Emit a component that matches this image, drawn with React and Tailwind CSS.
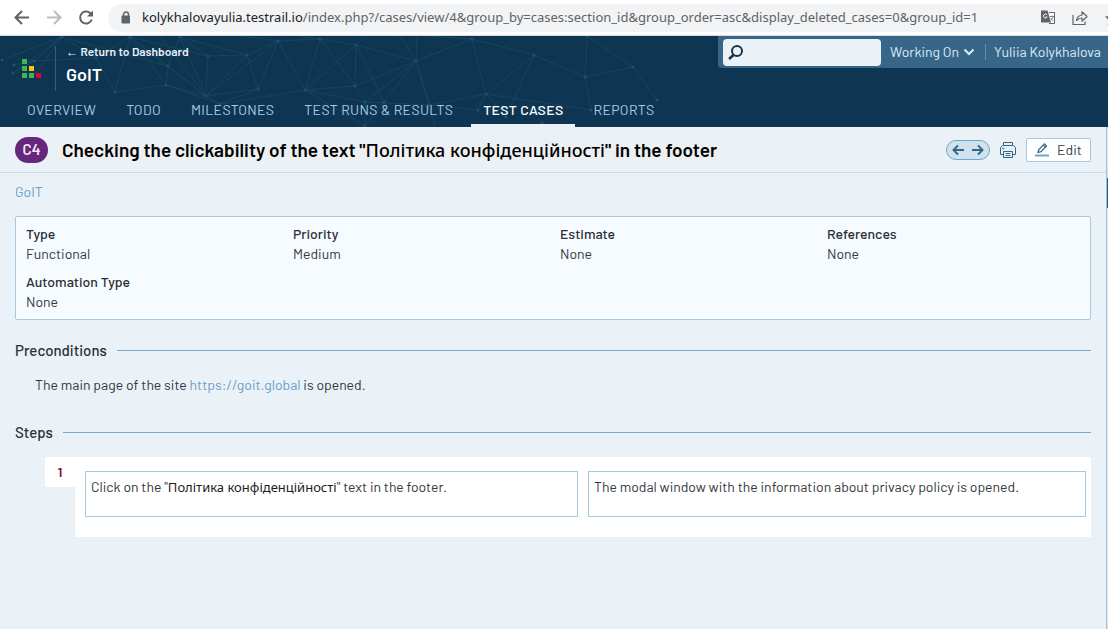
import React from "react";

const NODES = [
  [2,24],[14,29],[13,37],[34,25],[62,1],[96,22],[115,56],[130,1],[168,30],[180,1],[166,49],[208,20],[206,60],[247,19],[278,5],[258,53],[305,54],[320,3],[356,9],[416,25],[355,50],[365,66],[384,66],[472,3],[534,19],[486,58],[542,87],[506,81],[478,74],[585,41],[633,31],[657,64],[591,74],[587,0],[220,68],[365,90],[430,69],
];

const EDGES = [
  [0,4],[2,4],[1,3],[3,4],[2,3],[3,5],[4,5],[5,6],[6,7],[5,7],[7,8],[6,10],[8,10],[9,11],[8,9],[8,12],[10,12],[7,10],[11,12],[11,13],[9,13],[13,12],[13,15],[13,14],[14,15],[15,12],[14,16],[17,16],[14,17],[17,18],[16,18],[18,19],[19,20],[16,20],[16,21],[19,22],[20,21],[19,23],[23,25],[23,24],[24,25],[25,28],[24,27],[25,27],[24,29],[29,30],[30,31],[29,32],[29,33],[30,33],[25,32],[7,12],[12,34],[15,34],[16,34],[19,21],[18,20],[18,22],[17,20],[14,12],[16,35],[21,35],[22,35],[19,36],[21,36],[36,28],[36,25],[10,34],[4,8],[7,11],[9,12],
];

function Network() {
  return (
    <svg className="pointer-events-none absolute left-0 top-0" width="680" height="91" viewBox="0 0 680 91" aria-hidden="true">
      <g stroke="#1b4b66" strokeWidth="1" opacity="0.7">
        {EDGES.map(([a, b], i) => (
          <line key={i} x1={NODES[a][0]} y1={NODES[a][1]} x2={NODES[b][0]} y2={NODES[b][1]} />
        ))}
        <path d="M416 25L435 91M416 25L417 0M416 25L400 0M320 3L300 0M356 9L365 0M278 5L240 0M206 60L160 0M472 3L430 0M62 1L34 40" fill="none" />
      </g>
      <g fill="#1f5270">
        {NODES.map(([x, y], i) => (
          <circle key={i} cx={x} cy={y} r="1.5" />
        ))}
      </g>
    </svg>
  );
}

function BrowserBar() {
  return (
    <div className="flex h-9 items-center overflow-hidden border-b border-[#dadce0] bg-white pl-3">
      <button aria-label="Back" className="mr-3 text-[#5f6368]">
        <svg width="20" height="20" viewBox="0 0 20 20" fill="none" stroke="currentColor" strokeWidth="2"><path d="M17 9.500H4M10 3L3.500 9.500 10 16" /></svg>
      </button>
      <button aria-label="Forward" className="mr-3 text-[#babcbe]">
        <svg width="20" height="20" viewBox="0 0 20 20" fill="none" stroke="currentColor" strokeWidth="2"><path d="M3 9.500h13M10 3l6.500 6.500L10 16" /></svg>
      </button>
      <button aria-label="Reload" className="mr-3 text-[#5f6368]">
        <svg width="20" height="20" viewBox="0 0 20 20" fill="none" stroke="currentColor" strokeWidth="2"><path d="M15.800 11.500a6 6 0 1 1-1.500-6.300L16 7" /><path d="M17 2.500v6h-6z" fill="currentColor" stroke="none" /></svg>
      </button>
      <div className="flex h-7 min-w-0 flex-1 items-center rounded-l-full bg-[#f1f3f4] pl-[13px]">
        <svg className="mr-[11px] shrink-0" width="10" height="14" viewBox="0 0 10 14"><path d="M2.500 6V3.500a2.500 2.500 0 0 1 5 0V6" fill="none" stroke="#5f6368" strokeWidth="1.500" /><rect x="0.500" y="4.500" width="8.500" height="8" rx="1" fill="#5f6368" /></svg>
        <div className="min-w-0 flex-1 whitespace-nowrap pb-[2px] font-['Noto_Sans',sans-serif] text-[13px] leading-5 text-[#5f6368]">
          <span className="text-[#202124]">kolykhalovayulia.testrail.io</span>/index.php?/cases/view/4&amp;group_by=cases:section_id&amp;group_order=asc&amp;display_deleted_cases=0&amp;group_id=1
        </div>
      </div>
      <div className="flex h-7 shrink-0 items-center gap-4 bg-[#f1f3f4] text-[#5f6368]">
        <button aria-label="Translate this page">
          <svg width="16" height="16" viewBox="0 0 16 16"><path d="M9 2.500h5.500v11H9" fill="#fff" stroke="#5f6368" /><path d="M1 .5h6.500l3.500 12H2a1 1 0 0 1-1-1z" fill="#5f6368" /><path d="M7 4.800A2 2 0 1 0 7.200 7H5.500" fill="none" stroke="#f1f3f4" /><path d="M9.800 6.500h4M12 5.500v1M13.300 6.500c-.3 2-1.500 3-2.300 3.500M10.600 8l2.500 2.800" fill="none" stroke="#5f6368" strokeWidth="0.800" /></svg>
        </button>
        <button aria-label="Share this page">
          <svg width="16" height="16" viewBox="0 0 16 16" fill="none" stroke="#5f6368" strokeWidth="1.200"><path d="M1 5v9.500h12V11.500" /><path d="M4.500 10.500c.5-3 2-5 5.500-5.500V1.800l5 4.700-5 4.700V8C7.500 8 6 8.800 4.500 10.500z" strokeLinejoin="round" /></svg>
        </button>
        <button aria-label="Bookmark this page" className="w-1 overflow-hidden">
          <svg width="16" height="16" viewBox="0 0 16 16" fill="#5f6368"><path d="M8 1l2 5 5 .5-4 3.500 1.500 5L8 12l-4.500 3L5 10 1 6.500 6 6z" /></svg>
        </button>
      </div>
    </div>
  );
}

const TABS = ["OVERVIEW", "TODO", "MILESTONES", "TEST RUNS & RESULTS", "TEST CASES", "REPORTS"];

function Header() {
  return (
    <header className="relative overflow-hidden bg-[#0e3652]">
      <Network />
      <div className="relative flex items-start justify-between">
        <div className="flex items-start pt-2">
          <svg className="ml-[22px] mt-[15px]" width="20" height="20" viewBox="0 0 20 20" role="img" aria-label="TestRail">
            <path d="M0 0h5v5H0zM0 7h5v5H0zM0 14h5v5H0zM7 14h5v5H7z" fill="#3cb850" />
            <path d="M7 7h5v5H7z" fill="#ffc20e" />
            <path d="M14 14h5v5h-5z" fill="#e40046" />
          </svg>
          <div className="ml-[13px] mt-[2px] h-[45px] border-l border-[#2f607f] pl-2.5">
            <a href="#dashboard" className="-mt-px block whitespace-nowrap text-[12px] font-semibold leading-3 text-[#e9f1f8]">← Return to Dashboard</a>
            <div className="mt-[7px] text-[18px] font-semibold leading-5 text-white">GoIT</div>
          </div>
        </div>
        <div className="flex h-8 items-center rounded-bl-sm bg-[#386689] pl-[5px] pr-[7px] text-[14px] text-[#dceaf5]">
          <div className="flex h-[27px] w-[158px] items-center rounded-sm bg-[#eaf1f7] pl-1">
            <svg className="shrink-0" width="18" height="18" viewBox="0 0 18 18" fill="none" stroke="#12354f" strokeWidth="2"><circle cx="10" cy="8" r="5" /><path d="M6.500 12l-4.500 4" strokeWidth="2.500" /></svg>
            <input type="search" aria-label="Search" className="w-full min-w-0 bg-transparent px-1 text-[#12354f] outline-none" />
          </div>
          <button className="ml-[9px] flex items-center gap-1 whitespace-nowrap leading-5">
            Working On
            <svg width="12" height="12" viewBox="0 0 12 12" fill="none" stroke="currentColor" strokeWidth="2"><path d="M1.500 3.500L6 8l4.500-4.500" /></svg>
          </button>
          <a href="#user" className="ml-[10px] whitespace-nowrap border-l border-[#5b90b9] pl-2 leading-4">Yuliia Kolykhalova</a>
        </div>
      </div>
      <nav className="relative mt-[7px] flex pl-[15px] text-[14px]">
        {TABS.map((t) => (
          <a
            key={t}
            href={"#" + t.toLowerCase().replace(/[^a-z]+/g, "-")}
            className={
              t === "TEST CASES"
                ? "mr-[6px] h-[29px] whitespace-nowrap border-b-3 border-[#eaf1f7] px-3 leading-6 tracking-wide font-medium text-white"
                : "mr-[6px] h-[29px] whitespace-nowrap px-3 leading-6 tracking-wide text-[#a9cbe4]"
            }
          >
            {t}
          </a>
        ))}
      </nav>
    </header>
  );
}

function TitleBar() {
  return (
    <div className="flex h-[46px] items-center border-b border-[#c9dde8] pl-[15px] pr-[15px]">
      <span className="flex h-[26px] w-[33px] shrink-0 items-center justify-center rounded-full bg-[#67277c] text-[15px] font-semibold text-[#f3e9f7]">C4</span>
      <h1 className="ml-2 flex-1 whitespace-nowrap text-[19px] font-semibold leading-6 text-black">
        <span className="bg-[#edf0f2] px-[6px]">Checking the clickability of the text "<span className="font-['Noto_Sans',sans-serif] text-[18px] font-medium">Політика конфіденційності</span>" in the footer</span>
      </h1>
      <div className="flex h-5 w-11 items-center justify-between rounded-full border border-[#6fa6cc] bg-[#d1e2ee] px-1 text-[#33678c]">
        <button aria-label="Previous case">
          <svg width="14" height="14" viewBox="0 0 14 14" fill="none" stroke="currentColor" strokeWidth="2"><path d="M13 7H3M7 2.500L2.500 7 7 11.500" /></svg>
        </button>
        <button aria-label="Next case">
          <svg width="14" height="14" viewBox="0 0 14 14" fill="none" stroke="currentColor" strokeWidth="2"><path d="M1 7h10M7 2.500L11.500 7 7 11.500" /></svg>
        </button>
      </div>
      <button aria-label="Print" className="ml-[10px]">
        <svg width="16" height="18" viewBox="0 0 16 18" fill="none" stroke="#2f688d" strokeWidth="1"><path d="M3.500 4.500v-3h9v3M3.500 13.500h-3v-7l2-2h11l2 2v7h-3M3.500 10.500h9v6h-9zM5.500 12.500h5M5.500 14.500h5" /><path d="M2 7.500h2.500M3.250 6.500v2" stroke="#30b28a" /></svg>
      </button>
      <button className="ml-[10px] flex h-6 w-[65px] items-center justify-center gap-2 rounded-[2px] border border-[#a9c9df] bg-white text-[14px] leading-5 text-[#333f48]">
        <svg width="14" height="14" viewBox="0 0 14 14" fill="none"><path d="M3 9.500l.8-3L9.500.9l2 2L6 8.700zM8.300 2.200l2 2" stroke="#2c6389" strokeWidth="1.200" /><path d="M0 12.500h14" stroke="#6fa6cc" strokeWidth="2" /></svg>
        Edit
      </button>
    </div>
  );
}

const FIELDS = [
  ["Type", "Functional"],
  ["Priority", "Medium"],
  ["Estimate", "None"],
  ["References", "None"],
  ["Automation Type", "None"],
];

function Section({ title }) {
  return (
    <h2 className="flex items-center gap-[10px] text-[15px] font-medium leading-5 text-[#2b2f33]">
      {title}
      <span className="h-px flex-1 bg-[#75a8cc]" />
    </h2>
  );
}

export default function App() {
  return (
    <div className="flex min-h-screen flex-col bg-[#eaf1f7] font-[Barlow,Roboto,sans-serif] text-[14px] text-[#33383d]">
      <BrowserBar />
      <Header />
      <div className="flex flex-1">
        <main className="min-w-0 flex-1">
          <TitleBar />
          <div className="px-[15px] pt-[9px]">
            <a href="#goit" className="block leading-5 text-[#6b9fc8]">GoIT</a>
            <dl className="mt-[14px] grid grid-cols-[267fr_267fr_267fr_263fr] gap-y-2 rounded-[2px] border border-[#a9c9df] bg-[#f6fbff] pb-[7px] pl-[10px] pt-[7px]">
              {FIELDS.map(([k, v]) => (
                <div key={k}>
                  <dt className="font-medium leading-5 text-[#2b2f33]">{k}</dt>
                  <dd className="leading-5">{v}</dd>
                </div>
              ))}
            </dl>
            <div className="mt-5">
              <Section title="Preconditions" />
              <p className="ml-5 mt-[15px] leading-5">
                The main page of the site <a href="https://goit.global" className="text-[#6b9fc8]">https://goit.global</a> is opened.
              </p>
            </div>
            <div className="mt-[27px]">
              <Section title="Steps" />
              <div className="ml-[30px] mt-[15px] flex items-start">
                <div className="flex h-[30px] w-[30px] shrink-0 items-center justify-center bg-white font-semibold leading-5 text-[#7a0f3c]">1</div>
                <div className="grid min-w-0 flex-1 grid-cols-[493fr_498fr] gap-[10px] bg-white pb-5 pl-[10px] pr-[5px] pt-[14px]">
                  <div className="min-h-[46px] border border-[#a9c9df] px-[5px] pt-[5px] leading-5">
                    Click on the "<span className="font-['Noto_Sans',sans-serif] text-[13px] text-[#1c1c1c]">Політика конфіденційності</span>" text in the footer.
                  </div>
                  <div className="min-h-[46px] border border-[#a9c9df] px-[5px] pt-[5px] leading-5">
                    The modal window with the information about privacy policy is opened.
                  </div>
                </div>
              </div>
            </div>
          </div>
        </main>
        <div className="w-[2px] border-l border-[#a0c4de] bg-[#d3e4f1]">
          <div className="ml-auto mt-[51px] h-[30px] w-px bg-[#2b5878]" />
        </div>
      </div>
    </div>
  );
}
